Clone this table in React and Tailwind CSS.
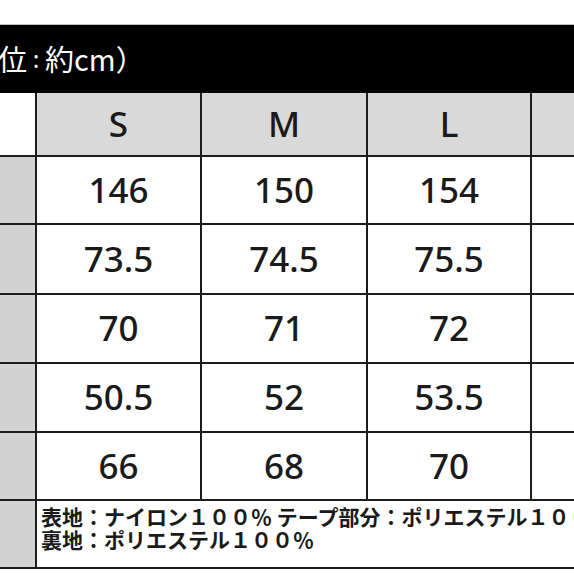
const rows = [
  { h: 'h-[68px]', v: ['146', '150', '154'] },
  { h: 'h-[70px]', v: ['73.5', '74.5', '75.5'] },
  { h: 'h-[69px]', v: ['70', '71', '72'] },
  { h: 'h-[69px]', v: ['50.5', '52', '53.5'] },
  { h: 'h-[68px]', v: ['66', '68', '70'] },
]

const widths = ['w-[165px]', 'w-[166px]', 'w-[164px]']

export default function App() {
  return (
    <div className="w-[574px] h-[574px] overflow-hidden bg-white text-[#1a1a1a] font-['Noto_Sans_CJK_JP',sans-serif]">
      <div className="h-[25px] bg-white border-b border-[#bdbdbd]" />

      {/* title bar */}
      <div className="h-[68px] bg-black flex items-center text-white text-[29px] leading-none whitespace-nowrap pb-[2px]">
        <span className="-ml-[2px]">位</span>
        <span className="inline-block w-[18px] text-center text-[24px]">:</span>
        <span>約cm）</span>
      </div>

      {/* header */}
      <div className="h-[64px] flex border-b-2 border-[#1c1c1c] text-[35px] font-medium font-['Noto_Sans',sans-serif]">
        <div className="w-[35px] shrink-0 bg-white" />
        {['S', 'M', 'L'].map((s, i) => (
          <div key={s} className={`${widths[i]} shrink-0 border-l-2 border-[#1c1c1c] bg-[#d9d9d9] flex items-center justify-center`}>
            {s}
          </div>
        ))}
        <div className="flex-1 border-l-2 border-[#1c1c1c] bg-[#d9d9d9]" />
      </div>

      {rows.map((r, ri) => (
        <div key={ri} className={`${r.h} flex border-b-2 border-[#1c1c1c] text-[35px] font-medium font-['Noto_Sans',sans-serif]`}>
          <div className="w-[35px] shrink-0 bg-[#d2d2d2]" />
          {r.v.map((v, i) => (
            <div key={i} className={`${widths[i]} shrink-0 border-l-2 border-[#1c1c1c] bg-white flex items-center justify-center`}>
              {v}
            </div>
          ))}
          <div className="flex-1 border-l-2 border-[#1c1c1c] bg-white" />
        </div>
      ))}

      {/* note */}
      <div className="h-[68px] flex border-b-2 border-[#1c1c1c]">
        <div className="w-[35px] shrink-0 bg-[#d2d2d2]" />
        <div className="flex-1 border-l-2 border-[#1c1c1c] bg-white pl-[4px] pt-[4px] text-[21px] leading-[23px] font-bold whitespace-nowrap overflow-hidden">
          <div>表地：ナイロン１００％ テープ部分：ポリエステル１００％</div>
          <div>裏地：ポリエステル１００％</div>
        </div>
      </div>
    </div>
  )
}
